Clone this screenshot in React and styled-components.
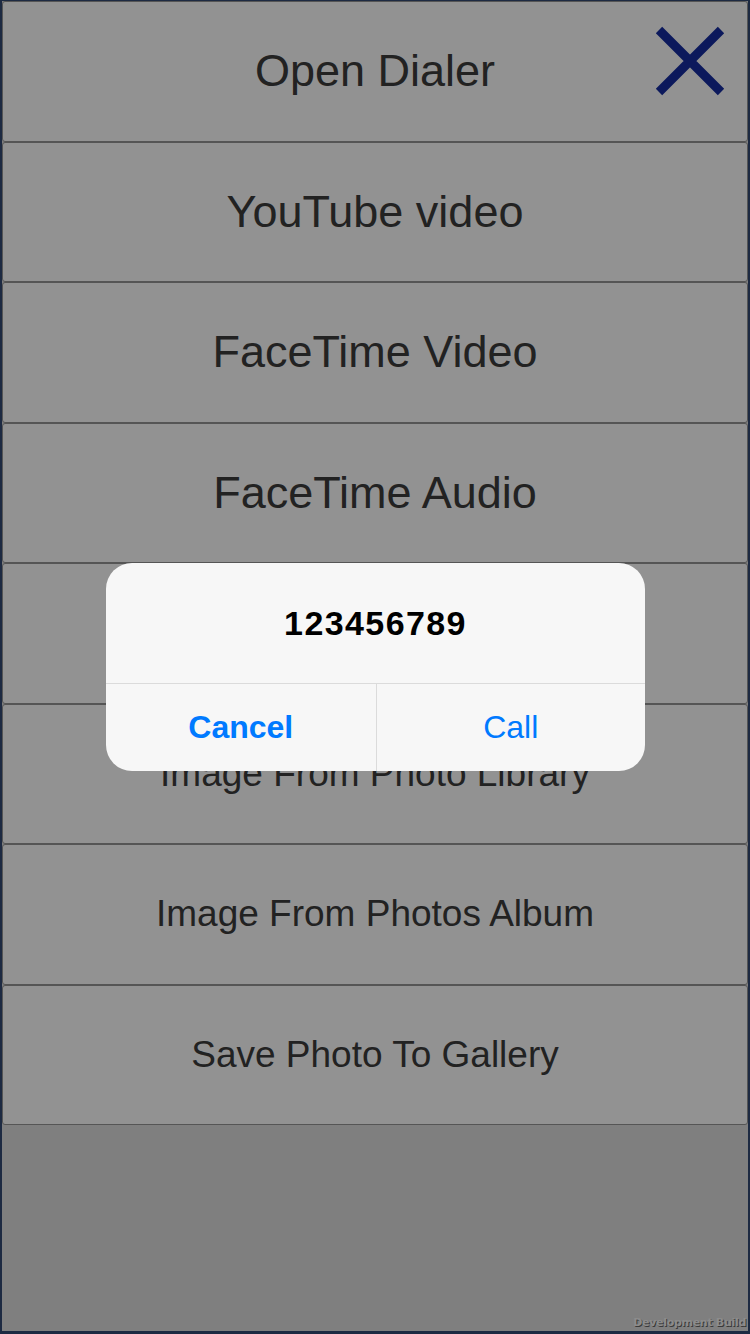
import React from 'react';
import styled, { createGlobalStyle } from 'styled-components';

const Global = createGlobalStyle`
  html, body { margin: 0; padding: 0; background: #1d2a42; }
  body { font-family: "Liberation Sans", Arial, sans-serif; }
  * { box-sizing: border-box; }
`;

const Screen = styled.div`
  position: relative;
  width: 750px;
  height: 1334px;
  padding: 1px 2px 3px 2px;
  background: #31466e;
  overflow: hidden;
`;

const Stage = styled.div`
  height: 100%;
  background: #d4d4d4;
  display: flex;
  flex-direction: column;
`;

const Row = styled.button`
  position: relative;
  flex: none;
  height: 140.5px;
  margin: 0;
  padding: 0;
  border: 1px solid #8e8e8e;
  border-radius: 3px;
  background: #f3f3f3;
  color: #393939;
  font-family: "Liberation Sans", Arial, sans-serif;
  font-size: ${(p) => p.$size}px;
  display: flex;
  align-items: center;
  justify-content: center;
`;

const Close = styled.span`
  position: absolute;
  top: 24px;
  right: 22px;
  width: 70px;
  height: 70px;
  display: block;
`;

const Overlay = styled.div`
  position: absolute;
  inset: 0;
  background: rgba(0, 0, 0, 0.4);
  display: flex;
  align-items: center;
  justify-content: center;
`;

const Dialog = styled.div`
  width: 539px;
  background: #f7f7f7;
  border-radius: 26px;
  overflow: hidden;
  margin-left: 1px;
`;

const Title = styled.div`
  height: 121px;
  display: flex;
  align-items: center;
  justify-content: center;
  border-bottom: 1px solid #dbdbdb;
  color: #000;
  font-size: 34px;
  font-weight: 700;
  letter-spacing: 1.4px;
`;

const Actions = styled.div`
  display: grid;
  grid-template-columns: 1fr 1fr;
  height: 87px;
`;

const Action = styled.button`
  margin: 0;
  padding: 0;
  border: 0;
  background: transparent;
  color: #007aff;
  font-family: "Liberation Sans", Arial, sans-serif;
  font-size: 32px;
  font-weight: ${(p) => (p.$bold ? 700 : 400)};
  & + & {
    border-left: 1px solid #dbdbdb;
  }
`;

const Watermark = styled.div`
  position: absolute;
  right: 4px;
  bottom: 5px;
  font-family: "DejaVu Sans", "Liberation Sans", sans-serif;
  font-size: 11px;
  font-weight: 700;
  letter-spacing: -0.3px;
  color: #8c8c8c;
  text-shadow: 1px 1px 0 #3a3a3a;
`;

const rows = [
  { label: 'Open Dialer', size: 45 },
  { label: 'YouTube video', size: 45 },
  { label: 'FaceTime Video', size: 45 },
  { label: 'FaceTime Audio', size: 45 },
  { label: '', size: 37 },
  { label: 'Image From Photo Library', size: 37 },
  { label: 'Image From Photos Album', size: 37 },
  { label: 'Save Photo To Gallery', size: 37 },
];

export default function App() {
  return (
    <>
      <Global />
      <Screen>
        <Stage>
          {rows.map((r, i) => (
            <Row key={i} $size={r.size}>
              {r.label}
              {i === 0 && (
                <Close>
                  <svg width="70" height="70" viewBox="0 0 70 70">
                    <path d="M4 4 L66 66 M66 4 L4 66" stroke="#142b99" strokeWidth="9" fill="none" />
                  </svg>
                </Close>
              )}
            </Row>
          ))}
        </Stage>
        <Overlay>
          <Dialog>
            <Title>123456789</Title>
            <Actions>
              <Action $bold>Cancel</Action>
              <Action>Call</Action>
            </Actions>
          </Dialog>
        </Overlay>
        <Watermark>Development Build</Watermark>
      </Screen>
    </>
  );
}
